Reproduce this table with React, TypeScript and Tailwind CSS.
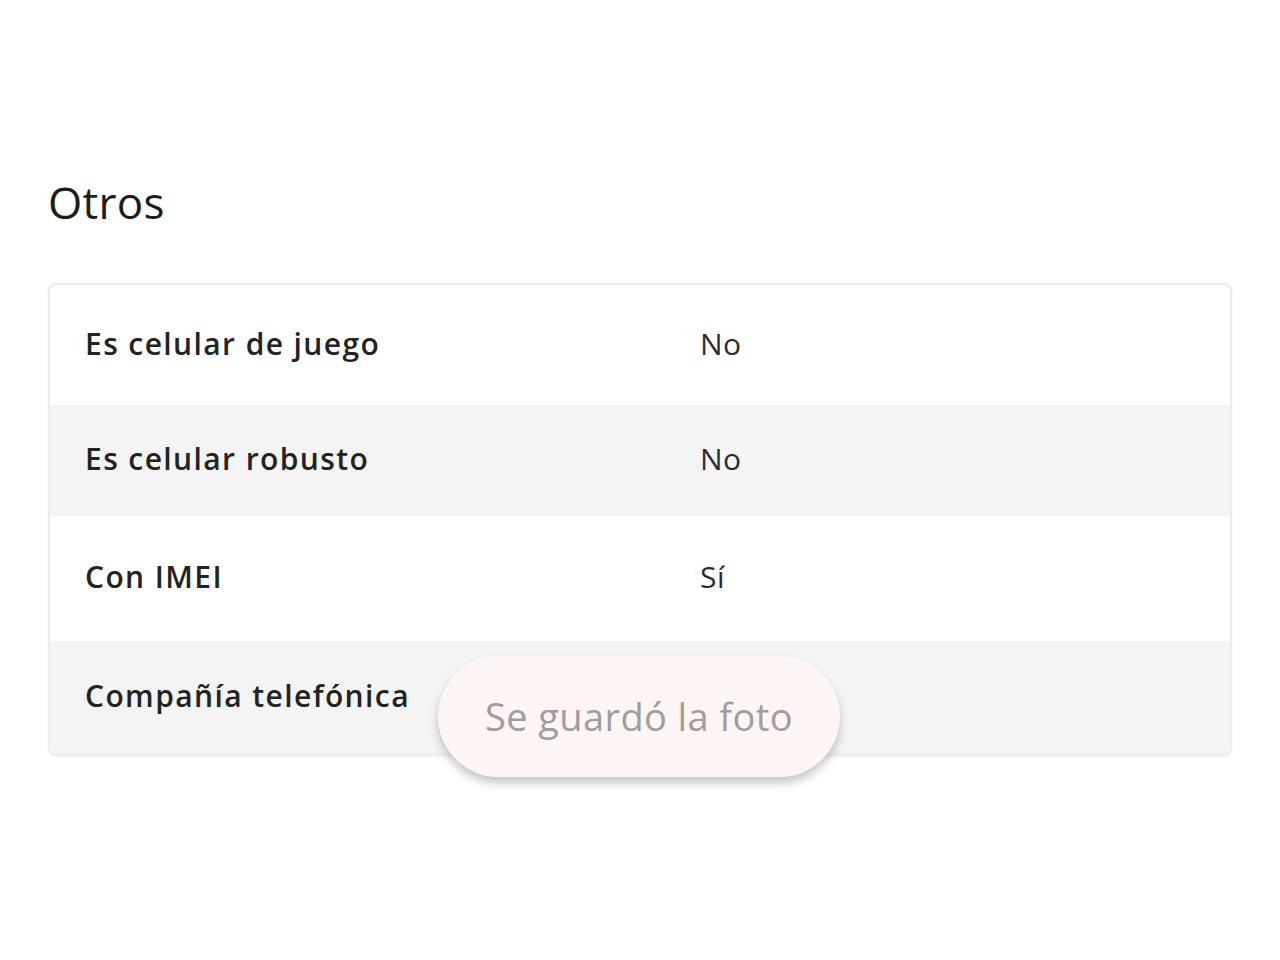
export default function App() {
  const rows = [
    { label: "Es celular de juego", value: "No", h: "h-[120px]", bg: "bg-white" },
    { label: "Es celular robusto", value: "No", h: "h-[111px]", bg: "bg-[#f4f4f4]" },
    { label: "Con IMEI", value: "Sí", h: "h-[125px]", bg: "bg-white" },
    { label: "Compañía telefónica", value: "", h: "h-[113px]", bg: "bg-[#f4f4f4]" },
  ];
  return (
    <div className="relative w-[1280px] h-[960px] bg-white overflow-hidden" style={{ fontFamily: "'Open Sans', Lato, sans-serif" }}>
      <div className="pt-[174px] px-[48px]">
        <h1 className="text-[44px] leading-[56px] tracking-[0.3px] text-[#1c1c1c] font-normal">Otros</h1>
        <div className="mt-[53px] w-[1184px] rounded-[8px] border-2 border-[#ececec] overflow-hidden shadow-[0_1px_3px_rgba(0,0,0,0.06)]">
          {rows.map((r) => (
            <div key={r.label} className={`flex items-center ${r.h} ${r.bg}`}>
              <div className="w-[650px] pl-[35px] text-[30px] tracking-[1.4px] font-semibold text-[#232323] -mt-[4px]">{r.label}</div>
              <div className="text-[30px] tracking-[0.5px] text-[#2c2c2c] -mt-[4px]">{r.value}</div>
            </div>
          ))}
        </div>
      </div>
      <div className="absolute left-[438px] top-[656px] w-[402px] h-[121px] rounded-full bg-[#fdf6f5] flex items-center justify-center shadow-[0_6px_10px_rgba(0,0,0,0.22)]">
        <span className="text-[38px] tracking-[0.4px] text-[#a29c9b]">Se guardó la foto</span>
      </div>
    </div>
  );
}
